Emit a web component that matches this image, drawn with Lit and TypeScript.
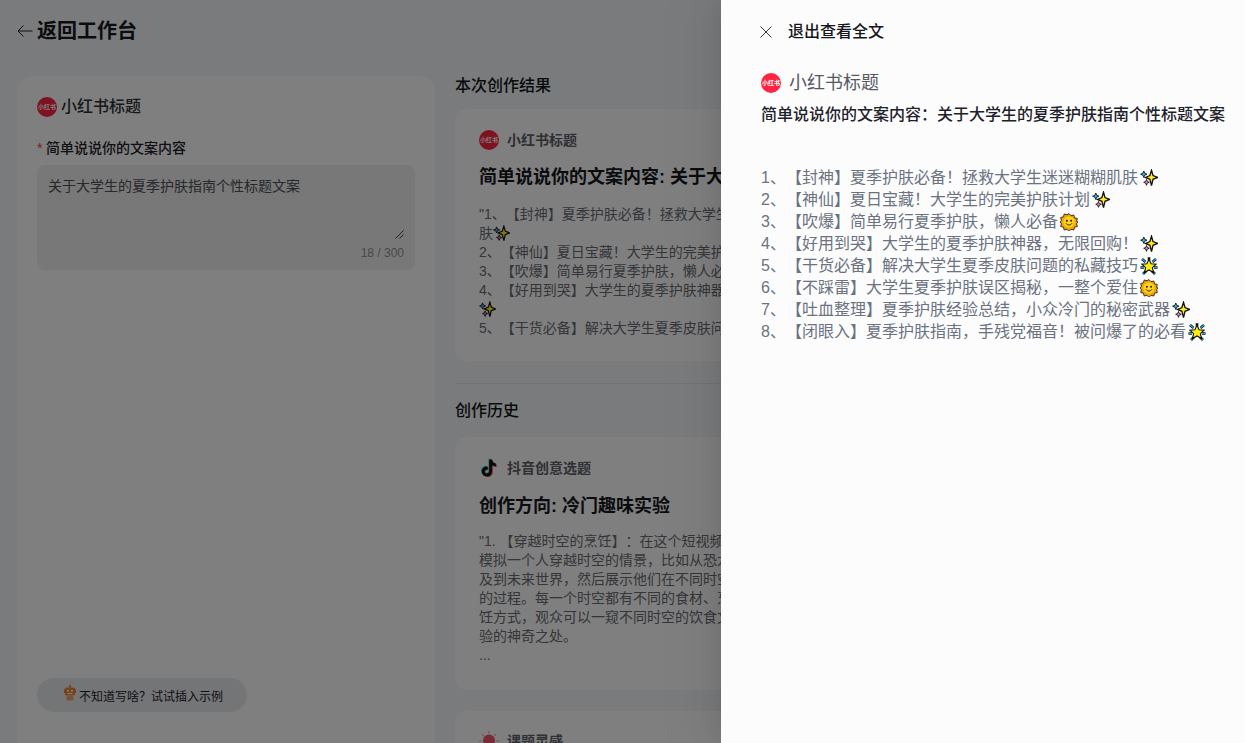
import { LitElement, html, css } from "lit";
import { customElement } from "lit/decorators.js";

const sparkle = html`<svg class="emo" viewBox="0 0 18 18"><path d="M11.500 1.200l1.500 5.300 4.600 1.900-4.600 1.900-1.500 6.300-1.600-6.300-4.400-1.900 4.400-1.900z" fill="#ffee10" stroke="#111" stroke-width="1.300"/><path d="M3.800 2l.9 2.300 2.300.9-2.300 1-.9 2.300-.9-2.300L.6 5.200l2.300-.9z" fill="#2fbdf0" stroke="#111" stroke-width=".9"/><path d="M6.500 10.500l.8 2 2 .8-2 .8-.8 2.200-.8-2.200-2-.8 2-.8z" fill="#f58cbc" stroke="#111" stroke-width=".9"/></svg>`;
const sun = html`<svg class="emo" viewBox="0 0 18 18"><path d="M9 .6l2 2.100 2.800-.7.700 2.800 2.800.7-.7 2.800L18 9l-1.400 1.700.7 2.800-2.800.7-.7 2.800-2.800-.7-2 2.100-2-2.100-2.800.7-.7-2.800-2.800-.7.7-2.800L0 9l1.400-1.700-.7-2.800 2.800-.7.700-2.800 2.800.7z" fill="#f5a300" stroke="#222" stroke-width=".9"/><circle cx="9" cy="9" r="5.600" fill="#ffd21e"/><circle cx="6.900" cy="7.800" r="1" fill="#222"/><circle cx="11.100" cy="7.800" r="1" fill="#222"/><path d="M6 10.300c1.600 2.300 4.400 2.300 6 0" fill="none" stroke="#222" stroke-width="1"/></svg>`;
const star = html`<svg class="emo" viewBox="0 0 18 18"><path d="M2 2l3.500 3M16 2l-3.500 3M.5 10.500H4M17.500 10.500H14M3 17l3-3M15 17l-3-3M9 .3V3" stroke="#111" stroke-width="2.600"/><path d="M2 2l3.500 3M16 2l-3.500 3M.5 10.500H4M17.500 10.500H14M3 17l3-3M15 17l-3-3" stroke="#1ea8dc" stroke-width="1.200"/><path d="M9 2l2.100 4.700 5 .5-3.700 3.400 1.100 5L9 13l-4.500 2.600 1.100-5-3.700-3.400 5-.5z" fill="#ffee10" stroke="#111" stroke-width="1.100"/></svg>`;
const notePath = "M10.200 1.500h2.700c.2 2.300 1.600 3.800 3.900 4v2.700c-1.500 0-2.800-.5-3.900-1.300v6.300c0 3-2.300 5.100-5.100 5.100-2.900 0-5-2.200-5-4.900 0-2.900 2.500-5.200 5.800-4.800v2.800c-1.600-.4-3 .6-3 2 0 1.200 1 2.100 2.200 2.100 1.300 0 2.400-.9 2.400-2.500z";
const tiktok = html`<svg class="ico" viewBox="0 0 20 20"><path d="${notePath}" fill="#25f4ee" transform="translate(-.8 -.7)"/><path d="${notePath}" fill="#fe2c55" transform="translate(.8 .7)"/><path d="${notePath}" fill="#111"/></svg>`;
const bulb = html`<svg class="ico" viewBox="0 0 20 20"><path d="M10 0v2.500M3 3l1.800 1.800M17 3l-1.800 1.800M0 10h2.500M17.500 10H20" stroke="#f2a0a8" stroke-width="1.200"/><circle cx="10" cy="9.500" r="6" fill="#f0566a"/><rect x="7.500" y="14" width="5" height="4" rx="1" fill="#f0566a"/></svg>`;
const robot = html`<svg class="robot" viewBox="0 0 12 18"><path d="M6 0l1.500 3.500h-3z" fill="#e8863a"/><rect x="1" y="3.500" width="10" height="8" rx="1.500" fill="#e8863a"/><rect x="0" y="5.500" width="1.200" height="3.500" fill="#e8863a"/><rect x="10.800" y="5.500" width="1.200" height="3.500" fill="#e8863a"/><rect x="3" y="6" width="2" height="1.500" fill="#fff"/><rect x="7" y="6" width="2" height="1.500" fill="#fff"/><rect x="3.500" y="9" width="5" height="1" fill="#fff"/><rect x="2.500" y="12" width="7" height="4.500" rx="1" fill="#f2a566"/></svg>`;

const logo = () => html`<span class="logo"><span>小红书</span></span>`;

@customElement("app-root")
export class AppRoot extends LitElement {
  static styles = css`
    :host {
      display: block;
      position: relative;
      height: 743px;
      overflow: hidden;
      background: #f5f6f8;
      font-family: "Liberation Sans", "Noto Sans CJK SC", sans-serif;
      color: #1d2129;
      text-spacing-trim: space-all;
      font-kerning: none;
    }
    .page { display: flex; flex-direction: column; height: 100%; padding: 0 17px; box-sizing: border-box; }
    .top { display: flex; align-items: center; gap: 4px; height: 62px; flex: none; }
    .top h1 { margin: 0; font-size: 20px; line-height: 28px; font-weight: 700; color: #16181d; }
    .back { width: 16px; height: 16px; }
    .cols { display: flex; gap: 20px; margin-top: 14px; flex: 1; min-height: 0; }
    .panel {
      width: 418px; flex: none; background: #fff; border-radius: 16px 16px 0 0;
      padding: 20px 20px 31px; box-sizing: border-box; display: flex; flex-direction: column;
    }
    .ptitle { display: flex; align-items: center; gap: 4px; font-size: 16px; line-height: 22px; font-weight: 500; color: #2c3038; }
    .logo {
      display: inline-flex; align-items: center; justify-content: center; border-radius: 50%;
      width: 20px; height: 20px; background: #ff2442; color: #fff; flex: none; overflow: hidden;
      font-weight: 700; white-space: nowrap;
    }
    .logo span { font-size: 10px; transform: scale(.6); }
    .label { margin-top: 20px; font-size: 14px; line-height: 20px; font-weight: 500; color: #1d2129; display: flex; gap: 3px; }
    .req { color: #f5363c; font-weight: 400; width: 6px; }
    .ta {
      margin-top: 7px; height: 105px; border-radius: 8px; background: #f0f0f1; position: relative;
      padding: 11px; box-sizing: border-box; font-size: 14px; line-height: 20px; color: #4f5156;
    }
    .count { position: absolute; right: 11px; bottom: 9px; font-size: 12px; line-height: 16px; color: #8f9196; }
    .grip { position: absolute; right: 11px; top: 65px; width: 9px; height: 9px; }
    .spacer { flex: 1; }
    .hint {
      align-self: flex-start; height: 34px; width: 210px; border-radius: 17px; background: #e9ebef;
      display: flex; align-items: center; gap: 3px; font-size: 12px; color: #1d2129;
      box-sizing: border-box; padding-left: 27px;
    }
    .robot { width: 12px; height: 18px; margin-top: -5px; }
    .right { width: 393px; flex: none; }
    h2 { margin: 0; font-size: 16px; line-height: 22px; font-weight: 500; color: #14161a; }
    .h1st { margin-top: -1px; }
    .card {
      background: #fff; border-radius: 12px; padding: 21px 24px 24px; margin-top: 12px; box-sizing: border-box;
      overflow: hidden;
    }
    .chead { display: flex; align-items: center; gap: 8px; font-size: 14px; line-height: 20px; font-weight: 700; color: #5d6068; }
    .ico { width: 20px; height: 20px; flex: none; }
    .ctitle { margin-top: 14px; font-size: 18px; line-height: 26px; font-weight: 700; color: #16181d; white-space: nowrap; }
    .cbody { margin-top: 15px; font-size: 14px; line-height: 19px; color: #686c74; white-space: pre; }
    .c1 { height: 252px; }
    .c2 { height: 253px; margin-top: 15px; }
    .c2 .ctitle { margin-top: 15px; }
    .c2 .cbody { margin-top: 13px; }
    .c3 { margin-top: 21px; height: 120px; padding-top: 20px; }
    hr { border: 0; border-top: 1px solid #e8e9ec; margin: 22px 0 16px; }
    .emo { display: inline-block; width: 18px; height: 18px; vertical-align: -4px; margin-left: 2px; }
    .cbody .emo { width: 17px; height: 17px; margin-left: 0; }
    .mask { position: absolute; inset: 0; background: rgba(0,0,0,.5); }
    .drawer {
      position: absolute; top: 0; right: 0; bottom: 0; width: 524px; background: #fcfcfd; box-sizing: border-box;
      padding: 0 0 0 40px; box-shadow: -6px 0 16px -8px rgba(0,0,0,.08), -9px 0 28px 0 rgba(0,0,0,.05), -12px 0 48px 16px rgba(0,0,0,.03);
    }
    .dhead { display: flex; align-items: center; gap: 16px; height: 60px; font-size: 16px; font-weight: 500; color: #14161a; }
    .x { width: 12px; height: 12px; margin: 3px 0 0 -1px; }
    .dtitle { display: flex; align-items: center; gap: 8px; margin-top: 10px; font-size: 18px; line-height: 26px; color: #565a63; font-weight: 400; }
    .dsub { margin-top: 7px; font-size: 16px; line-height: 24px; font-weight: 500; color: #1d2129; white-space: nowrap; }
    .dbody { margin-top: 40px; font-size: 16px; line-height: 22px; color: #6b7280; white-space: nowrap; }
    .dbody div { height: 22px; }
  `;

  render() {
    return html`
      <div class="page">
        <div class="top">
          <svg class="back" viewBox="0 0 16 16"><path d="M15.500 8H1M6.500 2.500L1 8l5.500 5.500" fill="none" stroke="#222" stroke-width="1"/></svg>
          <h1>返回工作台</h1>
        </div>
        <div class="cols">
          <section class="panel">
            <div class="ptitle">${logo()}小红书标题</div>
            <div class="label"><span class="req">*</span>简单说说你的文案内容</div>
            <div class="ta">关于大学生的夏季护肤指南个性标题文案
              <svg class="grip" viewBox="0 0 9 9"><path d="M.5 8.500l8-8M4.500 8.500l4-4" stroke="#444" stroke-width="1"/></svg>
              <span class="count">18 / 300</span>
            </div>
            <div class="spacer"></div>
            <div class="hint">${robot}不知道写啥？试试插入示例</div>
          </section>
          <section class="right">
            <h2 class="h1st">本次创作结果</h2>
            <div class="card c1">
              <div class="chead">${logo()}小红书标题</div>
              <div class="ctitle">简单说说你的文案内容: 关于大学生的夏季护肤指南个性标题文案</div>
              <div class="cbody">"1、【封神】夏季护肤必备！拯救大学生迷迷糊糊肌
肤${sparkle}
2、【神仙】夏日宝藏！大学生的完美护肤计划${sparkle}
3、【吹爆】简单易行夏季护肤，懒人必备${sun}
4、【好用到哭】大学生的夏季护肤神器，无限回购！
${sparkle}
5、【干货必备】解决大学生夏季皮肤问题的私藏技巧</div>
            </div>
            <hr />
            <h2>创作历史</h2>
            <div class="card c2">
              <div class="chead">${tiktok}抖音创意选题</div>
              <div class="ctitle">创作方向: 冷门趣味实验</div>
              <div class="cbody">"1. 【穿越时空的烹饪】：在这个短视频中，我们可以
模拟一个人穿越时空的情景，比如从恐龙时代到古代以
及到未来世界，然后展示他们在不同时空中烹饪美食
的过程。每一个时空都有不同的食材、烹饪工具和烹
饪方式，观众可以一窥不同时空的饮食文化，感受体
验的神奇之处。
...</div>
            </div>
            <div class="card c3">
              <div class="chead">${bulb}课题灵感</div>
            </div>
          </section>
        </div>
      </div>
      <div class="mask"></div>
      <aside class="drawer">
        <div class="dhead">
          <svg class="x" viewBox="0 0 12 12"><path d="M.5.5l11 11M11.500.5l-11 11" stroke="#333" stroke-width="1"/></svg>
          退出查看全文
        </div>
        <div class="dtitle">${logo()}小红书标题</div>
        <div class="dsub">简单说说你的文案内容：关于大学生的夏季护肤指南个性标题文案</div>
        <div class="dbody">
          <div>1、【封神】夏季护肤必备！拯救大学生迷迷糊糊肌肤${sparkle}</div>
          <div>2、【神仙】夏日宝藏！大学生的完美护肤计划${sparkle}</div>
          <div>3、【吹爆】简单易行夏季护肤，懒人必备${sun}</div>
          <div>4、【好用到哭】大学生的夏季护肤神器，无限回购！${sparkle}</div>
          <div>5、【干货必备】解决大学生夏季皮肤问题的私藏技巧${star}</div>
          <div>6、【不踩雷】大学生夏季护肤误区揭秘，一整个爱住${sun}</div>
          <div>7、【吐血整理】夏季护肤经验总结，小众冷门的秘密武器${sparkle}</div>
          <div>8、【闭眼入】夏季护肤指南，手残党福音！被问爆了的必看${star}</div>
        </div>
      </aside>
    `;
  }
}
